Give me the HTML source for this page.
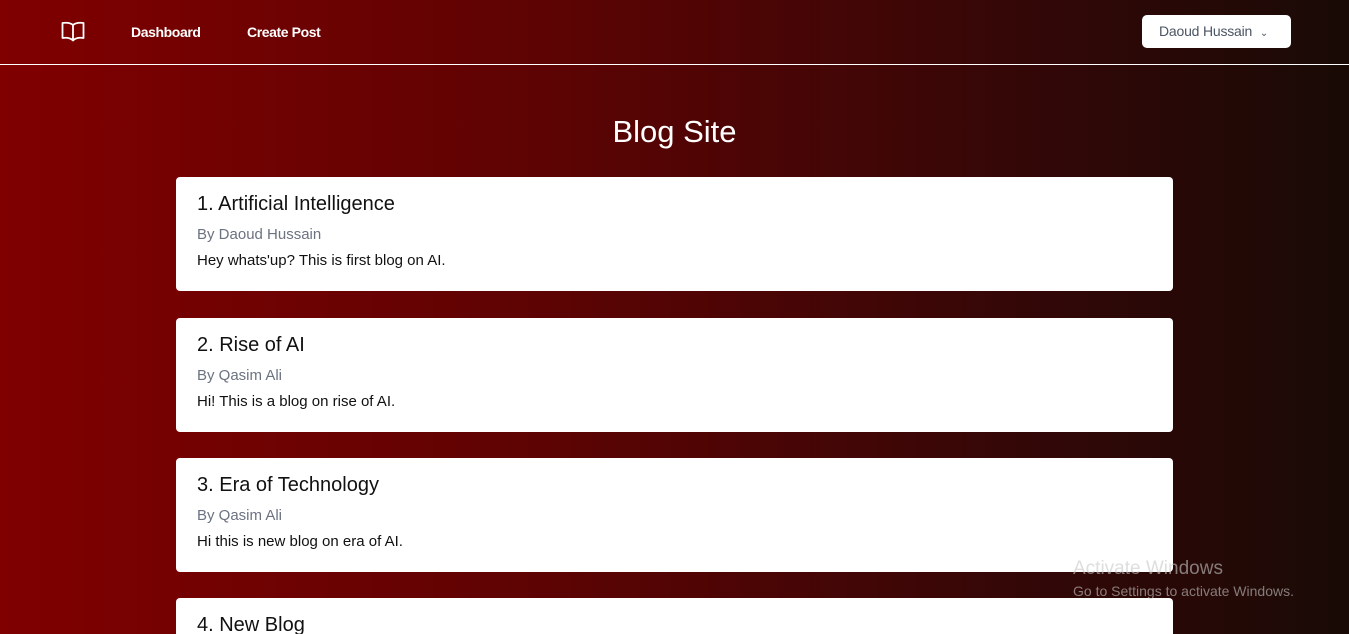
<!DOCTYPE html>
<html><head><style>
*{margin:0;padding:0;box-sizing:border-box}
html,body{width:1349px;height:634px;overflow:hidden}
body{background:linear-gradient(90deg,#800000 0%,#5e0303 40%,#350707 75%,#190a06 100%);font-family:"Liberation Sans",sans-serif;position:relative}
.nav{position:absolute;left:0;top:0;width:1349px;height:65px;border-bottom:1px solid #fff}
.nav a{position:absolute;top:24px;color:#fff;font-size:14px;font-weight:bold;letter-spacing:-0.4px}
.btn{position:absolute;left:1142px;top:15px;width:149px;height:33px;background:#fff;border-radius:5px;color:#4b5563;font-size:14px;padding:8px 0 0 17px;letter-spacing:-0.2px}
h1{position:absolute;top:114px;width:1349px;text-align:center;color:#fff;font-size:31px;font-weight:normal}
.card{position:absolute;left:176px;width:997px;height:114px;background:#fff;border-radius:4px;padding:16px 21px 0;overflow:hidden}
.card h2{font-size:20px;font-weight:normal;color:#111;margin-bottom:10px}
.card .by{font-size:15px;color:#6b7280;margin-bottom:9px}
.card p{font-size:15px;color:#111}
.wm{position:absolute;left:1073px;color:rgba(200,200,200,0.6)}
</style></head><body>
<div class="nav">
<svg style="position:absolute;left:61px;top:21px" width="24" height="22" viewBox="0 0 24 22" fill="none" stroke="#fff" stroke-width="1.8" stroke-linejoin="round"><path d="M12 4C9 1.5 5 1.5 1.5 2v15c3.5-.5 7.5-.5 10.5 2.5 3-3 7-3 10.5-2.5V2C19 1.5 15 1.5 12 4zM12 4v15.5"/></svg>
<a style="left:131px">Dashboard</a>
<a style="left:247px">Create Post</a>
<div class="btn">Daoud Hussain <span style="font-size:10px;margin-left:4px">&#8964;</span></div>
</div>
<h1>Blog Site</h1>
<div class="card" style="top:177px"><h2>1. Artificial Intelligence</h2><div class="by">By Daoud Hussain</div><p>Hey whats'up? This is first blog on AI.</p></div>
<div class="card" style="top:318px"><h2>2. Rise of AI</h2><div class="by">By Qasim Ali</div><p>Hi! This is a blog on rise of AI.</p></div>
<div class="card" style="top:458px"><h2>3. Era of Technology</h2><div class="by">By Qasim Ali</div><p>Hi this is new blog on era of AI.</p></div>
<div class="card" style="top:598px;height:36px;border-radius:4px 4px 0 0"><h2>4. New Blog</h2></div>
<div class="wm" style="top:558px;font-size:19px">Activate Windows</div>
<div class="wm" style="top:583px;font-size:14px">Go to Settings to activate Windows.</div>
</body></html>
